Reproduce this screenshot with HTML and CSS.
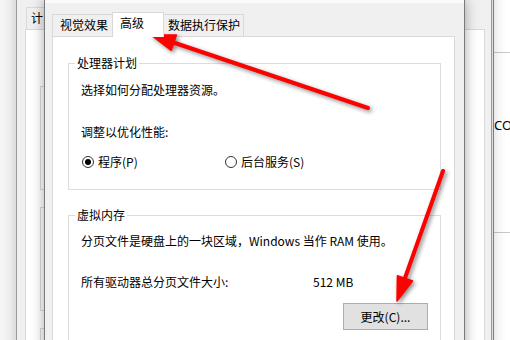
FILE: index.html
```html
<!DOCTYPE html>
<html lang="zh-CN">
<head>
    <meta charset="UTF-8">
    <meta name="viewport" content="width=device-width, initial-scale=1.0">
    <title>性能选项 - 高级</title>
    <link rel="stylesheet" href="styles.css">
</head>
<body>
    <div class="desk">
        <!-- window far behind, right side -->
        <div class="far-win">
            <div class="far-line far-line-top"></div>
            <div class="far-text">CO</div>
            <div class="far-line far-line-bottom"></div>
        </div>

        <!-- system properties window behind -->
        <div class="back-win">
            <div class="back-tabs">
                <div class="back-tab">计</div>
            </div>
            <div class="back-panel">
                <div class="back-group"></div>
                <div class="back-group"></div>
                <div class="back-group"></div>
            </div>
        </div>

        <!-- performance options dialog -->
        <div class="dialog">
            <div class="title-edge"></div>
            <div class="tabs">
                <div class="tab tab-visual">视觉效果</div>
                <div class="tab tab-active">高级</div>
                <div class="tab tab-dep">数据执行保护</div>
            </div>
            <div class="panel">
                <fieldset class="group group-cpu">
                    <legend class="legend">处理器计划</legend>
                    <p class="line line-intro">选择如何分配处理器资源。</p>
                    <p class="line line-adjust">调整以优化性能:</p>
                    <div class="radio-row">
                        <label class="radio-item radio-first">
                            <span class="radio radio-checked"></span>
                            <span>程序(P)</span>
                        </label>
                        <label class="radio-item">
                            <span class="radio"></span>
                            <span>后台服务(S)</span>
                        </label>
                    </div>
                </fieldset>

                <fieldset class="group group-mem">
                    <legend class="legend">虚拟内存</legend>
                    <p class="line line-intro">分页文件是硬盘上的一块区域，Windows 当作 RAM 使用。</p>
                    <div class="size-row">
                        <span class="size-label">所有驱动器总分页文件大小:</span>
                        <span>512 MB</span>
                    </div>
                    <button class="button" type="button">更改(C)...</button>
                </fieldset>
            </div>
        </div>

        <!-- red annotation arrows -->
        <svg class="arrows" width="510" height="340" viewBox="0 0 510 340">
            <g class="arrow">
                <line x1="368" y1="108" x2="172" y2="42" />
                <polygon points="151,35 176.4,35.1 171.2,50.3" />
            </g>
            <g class="arrow">
                <line x1="443" y1="171" x2="405" y2="278" />
                <polygon points="397,301 412.5,281 397.4,275.7" />
            </g>
        </svg>
    </div>
</body>
</html>
```

FILE: styles.css
```css
body {
    margin: 0;
    background: #f6f6f6;
    font-family: "Noto Sans CJK SC", "Noto Sans", sans-serif;
    font-size: 12px;
    color: #000;
    overflow: hidden;
}
.desk {
    position: relative;
    width: 510px;
    height: 340px;
    overflow: hidden;
}

/* far right window */
.far-win {
    position: absolute;
    left: 493px;
    top: 0;
    width: 100px;
    height: 340px;
    background: #fff;
    border-left: 1px solid #8c8c8c;
}
.far-line {
    height: 1px;
    background: #c8c8c8;
}
.far-line-top {
    margin-top: 52px;
}
.far-text {
    margin-top: 64px;
    height: 16px;
    line-height: 16px;
    font-family: "Noto Sans", sans-serif;
    font-size: 13px;
}
.far-line-bottom {
    margin-top: 99px;
}

/* window behind the dialog */
.back-win {
    position: absolute;
    left: 16px;
    top: -20px;
    width: 476px;
    height: 400px;
    background: #f0f0f0;
    border-left: 1px solid #9a9a9a;
    border-right: 1px solid #9a9a9a;
    box-shadow: 0 0 14px rgba(0, 0, 0, 0.22);
    padding-top: 27px;
    box-sizing: border-box;
}
.back-tabs {
    display: flex;
    padding-left: 9px;
    height: 22px;
}
.back-tab {
    width: 60px;
    height: 22px;
    box-sizing: border-box;
    border: 1px solid #d9d9d9;
    border-bottom: none;
    padding: 0 4px;
    line-height: 20px;
    background: #f0f0f0;
}
.back-panel {
    margin-left: 8px;
    width: 460px;
    height: 360px;
    box-sizing: border-box;
    background: #fff;
    border: 1px solid #d9d9d9;
    padding: 56px 0 0 14px;
}
.back-group {
    width: 300px;
    height: 104px;
    box-sizing: border-box;
    border: 1px solid #dcdcdc;
    margin-bottom: 17px;
}

/* performance options dialog */
.dialog {
    position: absolute;
    left: 44px;
    top: 0;
    width: 421px;
    height: 360px;
    box-sizing: border-box;
    background: #f0f0f0;
    border-left: 1px solid #7a7a7a;
    border-right: 1px solid #7a7a7a;
    box-shadow: 0 0 12px rgba(0, 0, 0, 0.35);
}
.title-edge {
    height: 3px;
    background: #fafafa;
}
.tabs {
    display: flex;
    align-items: flex-start;
    height: 22px;
    margin-top: 11px;
    margin-left: 7px;
}
.tab {
    height: 22px;
    box-sizing: border-box;
    border: 1px solid #d9d9d9;
    border-bottom: none;
    line-height: 20px;
    background: #f0f0f0;
    white-space: nowrap;
}
.tab-visual {
    width: 61px;
    padding-left: 7px;
}
.tab-active {
    position: relative;
    z-index: 1;
    width: 52px;
    height: 25px;
    margin-top: -2px;
    margin-left: -1px;
    padding-left: 7px;
    background: #fff;
}
.tab-dep {
    width: 81px;
    margin-left: -1px;
    padding-left: 4px;
}
.panel {
    margin-left: 7px;
    width: 403px;
    height: 330px;
    box-sizing: border-box;
    background: #fff;
    border: 1px solid #d9d9d9;
    padding: 0 13px 0 15px;
}
.group {
    margin: 0;
    min-width: 0;
    border: 1px solid #dcdcdc;
    padding: 0 12px 19px;
}
.group-cpu {
    margin-top: 18px;
}
.group-mem {
    margin-top: 17px;
}
.legend {
    padding: 0 2px;
    margin-left: -6px;
    line-height: 16px;
}
.line {
    margin: 0;
    line-height: 16px;
    white-space: nowrap;
}
.line-intro {
    margin-top: 10px;
}
.group-cpu .line-intro {
    margin-top: 11px;
}
.line-adjust {
    margin-top: 26px;
}
.radio-row {
    display: flex;
    margin-top: 14px;
    line-height: 16px;
}
.radio-item {
    display: flex;
    align-items: center;
    gap: 4px;
}
.radio-first {
    width: 143px;
    margin-left: 1px;
}
.radio {
    width: 12px;
    height: 12px;
    box-sizing: border-box;
    border: 1px solid #333;
    border-radius: 50%;
    background: #fff;
    display: flex;
    align-items: center;
    justify-content: center;
}
.radio-checked::after {
    content: "";
    width: 6px;
    height: 6px;
    border-radius: 50%;
    background: #000;
}
.size-row {
    display: flex;
    margin-top: 25px;
    line-height: 16px;
}
.size-label {
    width: 232px;
}
.button {
    display: block;
    margin: 13px 0 0 auto;
    width: 85px;
    height: 27px;
    padding: 0;
    font-family: inherit;
    font-size: 12px;
    color: #000;
    background: #e1e1e1;
    border: 1px solid #adadad;
}

/* annotation arrows */
.arrows {
    position: absolute;
    left: 0;
    top: 0;
    pointer-events: none;
    filter: drop-shadow(2px 2px 2px rgba(0, 0, 0, 0.45));
}
.arrow line {
    stroke: #ff0000;
    stroke-width: 4;
    stroke-linecap: round;
}
.arrow polygon {
    fill: #ff0000;
    stroke: #ff0000;
    stroke-width: 1.5;
    stroke-linejoin: round;
}
```
